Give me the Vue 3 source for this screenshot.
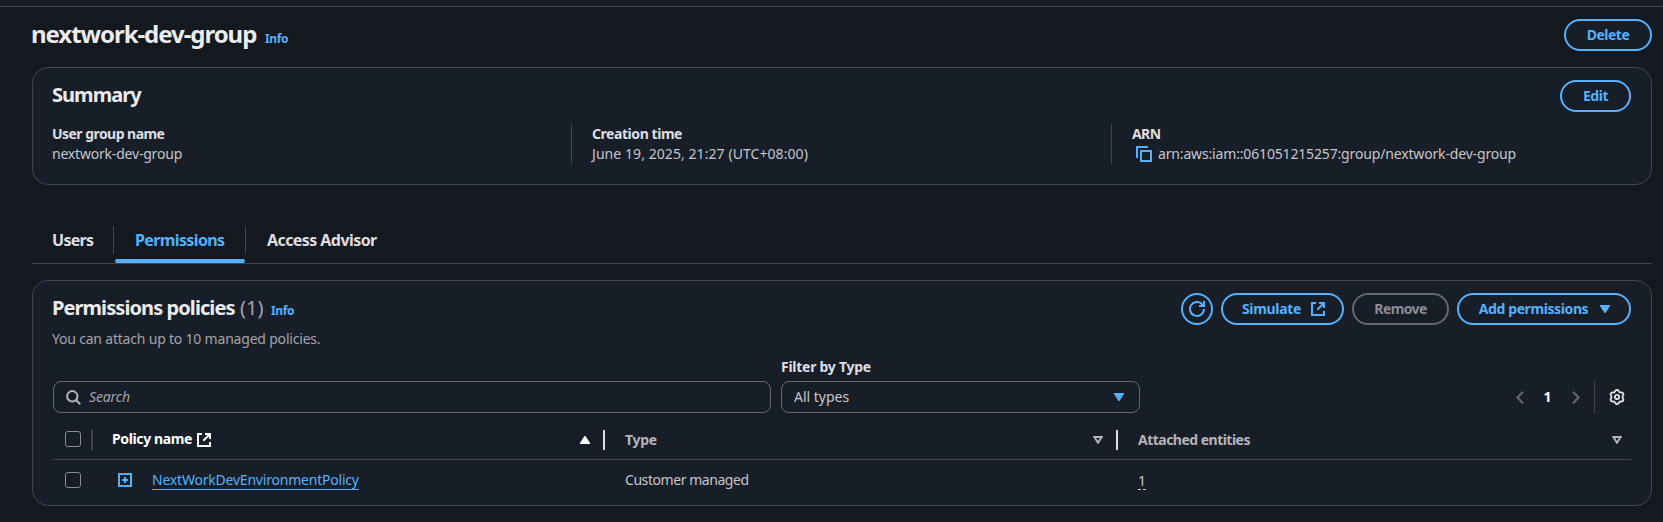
<script setup>
const columns = [
  { key: 'type', label: 'Type' },
  { key: 'entities', label: 'Attached entities' },
]
const policies = [
  { name: 'NextWorkDevEnvironmentPolicy', type: 'Customer managed', entities: 1 },
]

// Six-lobed gear outline, first lobe pointing up
const gearPoints = Array.from({ length: 72 }, (_, i) => {
  const a = (i / 72) * Math.PI * 2
  const r = 6.3 + 0.8 * Math.cos(6 * a)
  return `${(8 + r * Math.sin(a)).toFixed(2)},${(8 - r * Math.cos(a)).toFixed(2)}`
}).join(' ')
</script>

<template>
  <div class="page">
    <div class="topbar"></div>

    <header class="title-row">
      <h1>nextwork-dev-group</h1>
      <a class="info title-info">Info</a>
      <button class="btn delete">Delete</button>
    </header>

    <section class="card summary">
      <div class="summary-head">
        <h2 class="summary-title">Summary</h2>
        <button class="btn edit">Edit</button>
      </div>
      <div class="facts">
        <div class="fact">
          <div class="label user-label">User group name</div>
          <div class="value name-value">nextwork-dev-group</div>
        </div>
        <div class="fact">
          <div class="label time-label">Creation time</div>
          <div class="value time-value">June 19, 2025, 21:27 (UTC+08:00)</div>
        </div>
        <div class="fact">
          <div class="label arn-label">ARN</div>
          <div class="value arn">
            <svg class="copy" width="16" height="16" viewBox="0 0 16 16" fill="none" stroke="#55b1ff" stroke-width="2">
              <path d="M1 12V1h11" />
              <path d="M5 5h10v10H5z" />
            </svg>
            <span>arn:aws:iam::061051215257:group/nextwork-dev-group</span>
          </div>
        </div>
      </div>
    </section>

    <nav class="tabs">
      <a class="tab users">Users</a>
      <a class="tab active">Permissions</a>
      <a class="tab advisor">Access Advisor</a>
    </nav>

    <section class="card policies">
      <div class="policies-head">
        <div class="heading">
          <h2 class="policies-title">Permissions policies</h2>
          <span class="count">(1)</span>
          <a class="info policies-info">Info</a>
        </div>
        <div class="actions">
          <button class="btn round">
            <svg width="16" height="16" viewBox="0 0 16 16" fill="none" stroke="currentColor" stroke-width="2">
              <path d="M15 8a7 7 0 1 1-1.6-4.5l1.1 1.3" />
              <path d="M15 0v5h-5" />
            </svg>
          </button>
          <button class="btn simulate">
            <span>Simulate</span>
            <svg width="14" height="14" viewBox="0 0 14 14" fill="none" stroke="currentColor" stroke-width="2">
              <path d="M5 1H1v12h12V9" />
              <path d="M8 1h5v5M13 1 6.3 7.7" />
            </svg>
          </button>
          <button class="btn remove" disabled>Remove</button>
          <button class="btn add">
            <span>Add permissions</span>
            <svg width="10" height="8" viewBox="0 0 10 8"><path d="M0 0h10v1L5.5 8h-1L0 1z" fill="currentColor" /></svg>
          </button>
        </div>
      </div>
      <p class="description">You can attach up to 10 managed policies.</p>

      <div class="tools">
        <div class="search">
          <svg width="15" height="15" viewBox="0 0 15 15" fill="none" stroke="#b4b4bb" stroke-width="2">
            <circle cx="6.3" cy="6.3" r="5.2" />
            <path d="m10 10 4.2 4.2" />
          </svg>
          <span>Search</span>
        </div>
        <div class="filter">
          <div class="label filter-label">Filter by Type</div>
          <div class="select">
            <span>All types</span>
            <svg width="10" height="8" viewBox="0 0 10 8"><path d="M0 0h10v1L5.5 8h-1L0 1z" fill="#55b1ff" /></svg>
          </div>
        </div>
        <div class="pager">
          <svg width="8" height="13" viewBox="0 0 8 13" fill="none" stroke="#656871" stroke-width="2"><path d="M7 .7 1.4 6.5 7 12.3" /></svg>
          <span class="page-no">1</span>
          <svg width="8" height="13" viewBox="0 0 8 13" fill="none" stroke="#656871" stroke-width="2"><path d="m1 .7 5.6 5.8L1 12.3" /></svg>
          <i class="rule"></i>
          <svg width="16" height="16" viewBox="0 0 16 16" fill="none" stroke="#dedee3" stroke-width="1.9" stroke-linejoin="round">
            <polygon :points="gearPoints" />
            <circle cx="8" cy="8" r="2.1" />
          </svg>
        </div>
      </div>

      <div class="table">
        <div class="tr head">
          <div class="td select-cell"><i class="checkbox"></i><i class="bar dim"></i></div>
          <div class="td name-cell">
            <span class="sorted">Policy name</span>
            <svg width="14" height="14" viewBox="0 0 14 14" fill="none" stroke="#fff" stroke-width="2">
              <path d="M5 1H1v12h12V9" />
              <path d="M8 1h5v5M13 1 6.3 7.7" />
            </svg>
            <svg class="sort" width="10" height="8" viewBox="0 0 10 8"><path d="M0 8h10V7L5.500 0h-1L0 7z" fill="#fff" /></svg>
            <i class="bar"></i>
          </div>
          <div v-for="(c, i) in columns" :key="c.key" class="td" :class="c.key + '-cell'">
            <span class="col-label">{{ c.label }}</span>
            <svg class="sort" width="10" height="8" viewBox="0 0 10 8" fill="none" stroke="#b4b4bb" stroke-width="2"><path d="M1.300 1h7.400L5 6.700z" /></svg>
            <i v-if="i === 0" class="bar"></i>
          </div>
        </div>
        <div v-for="p in policies" :key="p.name" class="tr row">
          <div class="td select-cell"><i class="checkbox"></i></div>
          <div class="td name-cell">
            <svg class="plus" width="14" height="14" viewBox="0 0 14 14" fill="none" stroke="#55b1ff" stroke-width="2">
              <path d="M1 1h12v12H1zM7 4v6M4 7h6" />
            </svg>
            <a class="policy">{{ p.name }}</a>
          </div>
          <div class="td type-cell"><span>{{ p.type }}</span></div>
          <div class="td entities-cell"><span class="entity">{{ p.entities }}</span></div>
        </div>
      </div>
    </section>
  </div>
</template>

<style>
body {
  background: #14181f;
}
</style>

<style scoped>
* {
  box-sizing: border-box;
}
svg {
  display: block;
  flex: none;
}
.page {
  height: 522px;
  overflow: hidden;
  background: #14181f;
  color: #c6c6cd;
  font: 14px/20px "Noto Sans", "Open Sans", sans-serif;
  white-space: nowrap;
}
.topbar {
  height: 7px;
  background: #171e27;
  border-bottom: 1px solid #424650;
}
h1,
h2,
p {
  margin: 0;
}
.title-row {
  display: flex;
  align-items: flex-start;
  height: 60px;
  margin: 0 11px 0 31px;
  padding-top: 12px;
}
h1 {
  width: 234px;
  color: #ebebf0;
  font-size: 24px;
  line-height: 30px;
  letter-spacing: -1.05px;
}
.info {
  color: #55b1ff;
  font-size: 12px;
  font-weight: 700;
  letter-spacing: -0.4px;
}
.title-info {
  padding-top: 10px;
}
.btn {
  display: flex;
  align-items: center;
  justify-content: center;
  height: 32px;
  padding: 0;
  border: 2px solid #55b1ff;
  border-radius: 16px;
  background: #171e27;
  color: #55b1ff;
  font: 700 14px/20px "Noto Sans", "Open Sans", sans-serif;
  letter-spacing: -0.5px;
}
.delete {
  width: 88px;
  margin-left: auto;
}
.card {
  margin: 0 11px 0 32px;
  border: 1px solid #424650;
  border-radius: 16px;
  background: #171e27;
}
.summary {
  height: 118px;
  padding: 12px 20px 0 19px;
}
.summary-head {
  display: flex;
  justify-content: space-between;
  height: 44px;
}
h2 {
  color: #ebebf0;
  font-size: 20px;
  line-height: 30px;
}
.summary-title {
  letter-spacing: -0.95px;
}
.edit {
  width: 71px;
}
.facts {
  display: grid;
  grid-template-columns: repeat(3, 1fr);
  column-gap: 41px;
}
.fact {
  height: 40px;
}
.fact + .fact {
  margin-left: -21px;
  padding-left: 20px;
  border-left: 1px solid #424650;
}
.label {
  color: #dedee3;
  font-weight: 700;
}
.user-label {
  letter-spacing: -0.54px;
}
.time-label {
  letter-spacing: -0.44px;
}
.arn-label {
  letter-spacing: -0.6px;
}
.name-value {
  letter-spacing: -0.2px;
}
.time-value {
  letter-spacing: 0.07px;
}
.arn {
  display: flex;
  gap: 6px;
  padding-left: 4px;
  letter-spacing: -0.16px;
}
.copy {
  margin-top: 2px;
}
.tabs {
  display: flex;
  height: 38px;
  margin: 41px 11px 16px 32px;
  border-bottom: 1px solid #424650;
}
.tab {
  position: relative;
  height: 28px;
  color: #dedee3;
  font-size: 16px;
  font-weight: 700;
  line-height: 29px;
}
.users {
  width: 82px;
  padding-left: 20px;
  letter-spacing: -0.7px;
  border-right: 1px solid #424650;
}
.active {
  width: 132px;
  padding-left: 21px;
  color: #55b1ff;
  letter-spacing: -0.62px;
  border-right: 1px solid #424650;
}
.active::after {
  content: "";
  position: absolute;
  left: 1px;
  top: 33px;
  width: 130px;
  height: 4px;
  border-radius: 2px;
  background: #55b1ff;
}
.advisor {
  padding-left: 21px;
  letter-spacing: -0.57px;
}
.policies {
  height: 226px;
  padding: 12px 20px 0;
}
.policies-head {
  display: flex;
  justify-content: space-between;
  height: 36px;
}
.heading {
  display: flex;
  margin-left: -1px;
}
.policies-title {
  width: 188px;
  letter-spacing: -0.92px;
}
.count {
  width: 31px;
  color: #a4a4ad;
  font-size: 20px;
  line-height: 30px;
}
.policies-info {
  padding-top: 8px;
}
.actions {
  display: flex;
  gap: 8px;
}
.round {
  width: 32px;
}
.simulate {
  width: 123px;
  gap: 10px;
  padding-left: 2px;
  letter-spacing: -0.31px;
}
.remove {
  width: 97px;
  border-color: #656871;
  color: #8c8c94;
  letter-spacing: -0.62px;
}
.add {
  width: 174px;
  gap: 12px;
  padding-left: 1px;
  letter-spacing: -0.4px;
}
.description {
  height: 20px;
  margin-left: -1px;
  color: #a4a4ad;
  letter-spacing: -0.2px;
}
.tools {
  display: flex;
  align-items: flex-end;
  height: 64px;
}
.search,
.select {
  display: flex;
  align-items: center;
  height: 32px;
  border: 1px solid #656871;
  border-radius: 8px;
}
.search {
  width: 718px;
  margin-right: 10px;
  padding-left: 12px;
  gap: 8px;
  color: #a4a4ad;
  font-style: italic;
  letter-spacing: -0.15px;
}
.filter {
  width: 359px;
}
.filter-label {
  height: 24px;
  letter-spacing: -0.26px;
}
.select {
  justify-content: space-between;
  padding: 0 15px 0 12px;
}
.pager {
  display: flex;
  align-items: center;
  height: 32px;
  margin-left: auto;
  padding-right: 6px;
}
.page-no {
  width: 48px;
  padding-right: 1px;
  color: #fff;
  font-weight: 700;
  text-align: center;
}
.rule {
  width: 1px;
  height: 32px;
  margin: 0 14px;
  background: #424650;
}
.tr {
  display: flex;
}
.td {
  display: flex;
  align-items: center;
}
.head {
  height: 47px;
  border-bottom: 1px solid #424650;
  color: #b4b4bb;
  font-weight: 700;
}
.head .td {
  height: 46px;
  padding-top: 8px;
}
.select-cell {
  width: 40px;
  padding-left: 12px;
}
.checkbox {
  width: 16px;
  height: 16px;
  border: 1px solid #8c8c94;
  border-radius: 3px;
}
.head .checkbox {
  margin-top: -2px;
}
.bar {
  width: 2px;
  height: 20px;
  margin-left: 13px;
  background: #dedee3;
}
.head .bar {
  margin-top: -1px;
}
.dim {
  margin-left: 10px;
  background: #424650;
}
.name-cell {
  width: 512px;
  padding-left: 20px;
}
.sorted {
  width: 85px;
  margin-left: -1px;
  margin-top: -2px;
  color: #fff;
  letter-spacing: -0.38px;
}
.sort {
  margin-top: -1px;
  margin-left: auto;
}
.type-cell {
  width: 513px;
  padding-left: 20px;
}
.head .type-cell {
  letter-spacing: -0.3px;
}
.entities-cell {
  flex: 1;
  padding-left: 20px;
}
.head .entities-cell {
  padding-right: 9px;
  letter-spacing: -0.52px;
}
.row {
  height: 40px;
}
.row .type-cell {
  letter-spacing: -0.44px;
}
.plus {
  margin-left: 5px;
}
.policy {
  height: 20px;
  margin-left: 20px;
  border-bottom: 1px solid #55b1ff;
  color: #55b1ff;
  letter-spacing: -0.21px;
}
.entity {
  height: 19px;
  border-bottom: 1px dashed #c6c6cd;
}
</style>
